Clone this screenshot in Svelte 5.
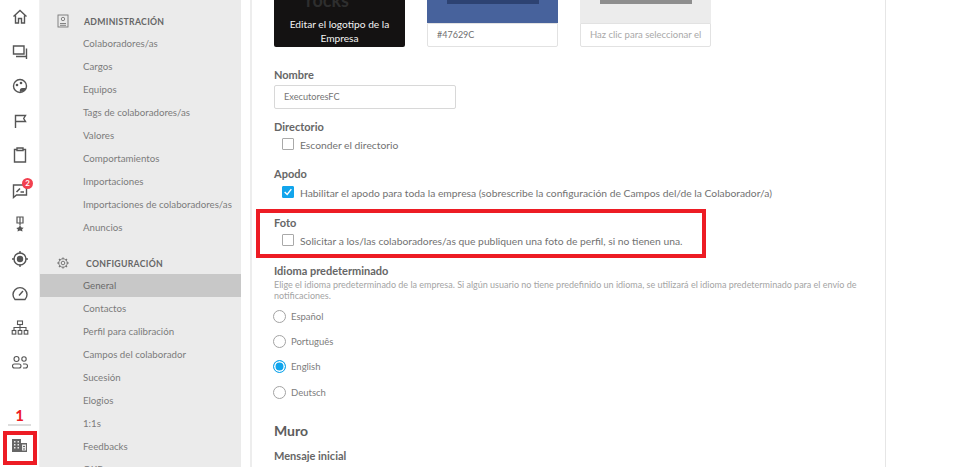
<script>
	const railTop = ['home', 'chat', 'palette', 'flag', 'clip', 'review', 'medal', 'target', 'gauge', 'org', 'people'];
	const admin = [
		'Colaboradores/as',
		'Cargos',
		'Equipos',
		'Tags de colaboradores/as',
		'Valores',
		'Comportamientos',
		'Importaciones',
		'Importaciones de colaboradores/as',
		'Anuncios'
	];
	const config = [
		'General',
		'Contactos',
		'Perfil para calibración',
		'Campos del colaborador',
		'Sucesión',
		'Elogios',
		'1:1s',
		'Feedbacks',
		'OKRs'
	];
	const langs = ['Español', 'Português', 'English', 'Deutsch'];
</script>

<div class="page">
	<nav class="rail">
		{#each railTop as icon}
			<div class="rail-item">
				<svg width="18" height="18" viewBox="0 0 18 18" fill="none" stroke="#555" stroke-width="1.400">
					{#if icon === 'home'}
						<path d="M2.500 8.500L9 2.500l6.500 6M4.500 7.500v7.500h3v-4.500h3V15h3V7.500" />
					{:else if icon === 'chat'}
						<path d="M2.500 3h10.500v8H2.500zM5 13.500h10.500V5.500M15.500 13.500V16" />
					{:else if icon === 'palette'}
						<circle cx="9" cy="9" r="6.500" />
						<circle cx="6" cy="8" r="1.300" fill="#555" stroke="none" />
						<circle cx="10" cy="6" r="1.300" fill="#555" stroke="none" />
						<path d="M9 15c-.8-2 .2-4 2.500-4H15l-1.500 3z" fill="#555" stroke="none" />
					{:else if icon === 'flag'}
						<path d="M4.500 16V3.500h10l-1.800 3 1.800 3H4.500" />
					{:else if icon === 'clip'}
						<path d="M6 3.500H3.500v12.500h11V3.500H12M6 2h6v2.500H6z" />
					{:else if icon === 'review'}
						<path d="M2.500 4h13v10H5.500l-3 2.500z" />
						<path d="M5.500 11l3.500-3.500M9.500 11H13" stroke-width="1.600" />
					{:else if icon === 'medal'}
						<path d="M6 2h6v6H6zM9 2v8.500" stroke-width="1.200" />
						<path d="M9 10.500l1.500 2 2.200.3-1.600 1.500.4 2.200L9 15.600l-2.500 1 .4-2.200-1.600-1.500 2.200-.3z" fill="#555" stroke="none" />
					{:else if icon === 'target'}
						<circle cx="9" cy="9" r="6" />
						<circle cx="9" cy="9" r="3.200" fill="#555" stroke="none" />
						<path d="M9 1v2.500M9 14.500V17M1 9h2.500M14.500 9H17" />
					{:else if icon === 'gauge'}
						<path d="M4 15.500a7 7 0 1 1 10 0z" />
						<path d="M8 11.500l4-4.500" />
					{:else if icon === 'org'}
						<g stroke-width="1.100">
							<rect x="6.500" y="2" width="5" height="3.500" />
							<path d="M9 5.500V9M3 11.500V8.500h12v3M9 9v2.500" />
							<rect x="1.200" y="11.500" width="3.600" height="3.600" />
							<rect x="7.200" y="11.500" width="3.600" height="3.600" />
							<rect x="13.200" y="11.500" width="3.600" height="3.600" />
						</g>
					{:else}
						<g stroke-width="1.100">
							<circle cx="5.500" cy="6" r="2.500" />
							<circle cx="13" cy="6" r="2.200" />
							<rect x="1.500" y="11" width="8.500" height="4" rx="2" />
							<path d="M12 11h2.500a2 2 0 0 1 0 4H12" />
						</g>
					{/if}
				</svg>
				{#if icon === 'review'}<span class="badge">2</span>{/if}
			</div>
		{/each}
		<div class="rail-end">
			<span class="step">1</span>
			<span class="rail-line"></span>
			<div class="company">
				<svg width="15" height="13" viewBox="0 0 15 13" fill="#666" stroke="none">
					<path d="M0 0h9v13H0zM9 4h6v9H9z" />
					<path d="M2 2h1.500v1.500H2zM5.500 2H7v1.500H5.500zM2 5h1.500v1.500H2zM5.500 5H7v1.500H5.500zM2 8h1.500v1.500H2zM5.500 8H7v1.500H5.500zM10 5.500h4v6h-4z" fill="#e8e8e8" />
					<path d="M11 7h2v1h-2zM11 9.500h2v1h-2z" />
				</svg>
			</div>
		</div>
	</nav>

	<aside class="side">
		<section class="group">
			<header class="group-head">
				<svg width="12" height="14" viewBox="0 0 12 14" fill="none" stroke="#777" stroke-width="0.900">
					<rect x="1" y="1" width="10" height="12" />
					<circle cx="6" cy="5" r="1.700" />
					<path d="M3 9.500h6M3 11.300h6" />
				</svg>
				<span>ADMINISTRACIÓN</span>
			</header>
			{#each admin as item}
				<div class="link">{item}</div>
			{/each}
		</section>
		<section class="group">
			<header class="group-head config">
				<svg width="12" height="12" viewBox="0 0 12 12" fill="none" stroke="#777" stroke-width="1">
					<circle cx="6" cy="6" r="1.800" />
					<circle cx="6" cy="6" r="4.200" />
					<path d="M6 .4v1.600M6 10v1.600M.4 6H2M10 6h1.600M2 2l1.200 1.200M8.800 8.800L10 10M10 2L8.800 3.200M3.200 8.800L2 10" stroke-width="1.300" />
				</svg>
				<span>CONFIGURACIÓN</span>
			</header>
			{#each config as item, i}
				<div class="link" class:active={i === 0}>{item}</div>
			{/each}
		</section>
	</aside>

	<main class="main">
		<div class="brand">
			<div class="tile logo">
				<span class="logo-word">rocks</span>
				<span class="logo-text">Editar el logotipo de la Empresa</span>
			</div>
			<div class="swatch">
				<div class="swatch-color blue"><span class="swatch-bar navy"></span></div>
				<div class="swatch-input">#47629C</div>
			</div>
			<div class="swatch">
				<div class="swatch-color grey"><span class="swatch-bar mid"></span></div>
				<div class="swatch-input hint">Haz clic para seleccionar el</div>
			</div>
		</div>

		<div class="label name-label">Nombre</div>
		<div class="text-input">ExecutoresFC</div>

		<div class="label dir-label">Directorio</div>
		<div class="check">
			<span class="box"></span>
			<span>Esconder el directorio</span>
		</div>

		<div class="label apodo-label">Apodo</div>
		<div class="check low">
			<span class="box checked">
				<svg width="12" height="12" viewBox="0 0 12 12" fill="none" stroke="#fff" stroke-width="1.700"><path d="M2 6l3 3 5-6.500" /></svg>
			</span>
			<span>Habilitar el apodo para toda la empresa (sobrescribe la configuración de Campos del/de la Colaborador/a)</span>
		</div>

		<div class="foto">
			<div class="label">Foto</div>
			<div class="check">
				<span class="box"></span>
				<span>Solicitar a los/las colaboradores/as que publiquen una foto de perfil, si no tienen una.</span>
			</div>
			<span class="highlight"></span>
		</div>

		<div class="label lang-label">Idioma predeterminado</div>
		<p class="help">Elige el idioma predeterminado de la empresa. Si algún usuario no tiene predefinido un idioma, se utilizará el idioma predeterminado para el envío de notificaciones.</p>
		<div class="radios">
			{#each langs as lang}
				<div class="radio-row">
					<span class="radio" class:on={lang === 'English'}></span>
					<span>{lang}</span>
				</div>
			{/each}
		</div>

		<h2>Muro</h2>
		<div class="label">Mensaje inicial</div>
	</main>
	<span class="company-box"></span>
</div>

<style>
	:global(body) {
		margin: 0;
		background: #fff;
	}
	.page {
		position: relative;
		display: flex;
		width: 955px;
		height: 467px;
		overflow: hidden;
		font-family: Lato, 'Noto Sans', sans-serif;
		color: #6f6f6f;
	}
	.rail {
		flex: 0 0 40px;
		display: flex;
		flex-direction: column;
		align-items: center;
		box-sizing: border-box;
		border-right: 1px solid #f0f0f0;
	}
	.rail-item {
		position: relative;
		flex: 0 0 34.5px;
		display: flex;
		align-items: center;
		justify-content: center;
		width: 100%;
	}
	.badge {
		position: absolute;
		top: 5px;
		left: 22px;
		width: 11px;
		height: 11px;
		border-radius: 50%;
		background: #f2404f;
		color: #fff;
		font-size: 8px;
		font-weight: 700;
		line-height: 11px;
		text-align: center;
	}
	.rail-end {
		margin-top: auto;
		display: flex;
		flex-direction: column;
		align-items: center;
	}
	.step {
		color: #ed1c24;
		font-size: 15px;
		font-weight: 700;
		line-height: 18px;
	}
	.rail-line {
		width: 23px;
		height: 2px;
		background: #ddd;
	}
	.company {
		height: 39px;
		display: flex;
		align-items: center;
		padding-bottom: 2px;
	}
	.company-box {
		position: absolute;
		left: 3px;
		top: 431px;
		width: 34px;
		height: 34px;
		box-sizing: border-box;
		border: 4px solid #ed1c24;
	}
	.side {
		flex: 0 0 201px;
		background: #ebebeb;
		padding-top: 10px;
		box-sizing: border-box;
	}
	.group + .group {
		margin-top: 13px;
	}
	.group-head {
		display: flex;
		align-items: center;
		height: 22px;
		padding-left: 17px;
		font-size: 8.700px;
		font-weight: 700;
		color: #666;
	}
	.group-head span {
		margin-left: 15px;
		letter-spacing: 0.300px;
	}
	.group-head.config span {
		margin-left: 17px;
	}
	.link {
		height: 23px;
		line-height: 23px;
		padding-left: 43px;
		font-size: 9.700px;
		color: #7b7b7b;
		white-space: nowrap;
	}
	.link.active {
		background: #c8c8c8;
		color: #6a6a6a;
	}
	.main {
		flex: 0 0 636px;
		margin-left: 9px;
		padding-left: 22px;
		box-sizing: border-box;
		border-left: 2px solid #ededed;
		border-right: 1px solid #e6e6e6;
		height: 467px;
		font-size: 10px;
	}
	.brand {
		display: flex;
		gap: 22px;
		height: 47px;
	}
	.tile {
		position: relative;
		width: 131px;
		background: #141212;
		color: #fff;
		border-radius: 0 0 2px 2px;
		overflow: hidden;
		text-align: center;
	}
	.logo-word {
		position: absolute;
		top: -11px;
		left: 32px;
		font-size: 18px;
		font-weight: 700;
		color: #2e2e2e;
	}
	.logo-text {
		position: absolute;
		left: 8px;
		right: 8px;
		bottom: 2px;
		font-size: 10.200px;
		line-height: 13.500px;
		color: #f2f2f2;
	}
	.swatch {
		width: 131px;
		display: flex;
		flex-direction: column;
	}
	.swatch-color {
		height: 23px;
		display: flex;
		justify-content: center;
		align-items: flex-start;
	}
	.blue {
		background: #47629c;
	}
	.grey {
		background: #ececec;
	}
	.swatch-bar {
		width: 92px;
		height: 4px;
	}
	.navy {
		background: #2d4272;
	}
	.mid {
		background: #8e8e8e;
	}
	.swatch-input {
		height: 24px;
		line-height: 22px;
		box-sizing: border-box;
		border: 1px solid #e2e2e2;
		border-radius: 0 0 2px 2px;
		padding-left: 9px;
		font-size: 9px;
		color: #6f6f6f;
		white-space: nowrap;
		overflow: hidden;
	}
	.swatch-input.hint {
		font-size: 9.500px;
		color: #a8a8a8;
	}
	.label {
		font-size: 11px;
		font-weight: 700;
		color: #666;
		line-height: 14px;
	}
	.name-label {
		margin-top: 21px;
	}
	.text-input {
		width: 182px;
		height: 24px;
		line-height: 22px;
		box-sizing: border-box;
		border: 1px solid #d8d8d8;
		border-radius: 2px;
		padding-left: 9px;
		margin-top: 3px;
		font-size: 9.200px;
		color: #757575;
	}
	.dir-label {
		margin-top: 11px;
	}
	.apodo-label {
		margin-top: 12px;
	}
	.check {
		display: flex;
		align-items: center;
		gap: 6px;
		padding-left: 8px;
		margin-top: 1px;
		height: 20px;
		font-size: 10.300px;
		color: #727272;
		white-space: nowrap;
	}
	.check.low {
		margin-top: 2px;
	}
	.box {
		width: 10px;
		height: 10px;
		flex: none;
		border: 1px solid #a9a9a9;
		border-radius: 1px;
		display: flex;
		align-items: center;
		justify-content: center;
		margin-top: -3px;
	}
	.box.checked {
		background: #12a5ec;
		border-color: #12a5ec;
	}
	.foto {
		position: relative;
		margin-top: 13px;
	}
	.highlight {
		position: absolute;
		left: -18px;
		top: -7px;
		width: 450px;
		height: 49px;
		box-sizing: border-box;
		border: 4px solid #ed1c24;
	}
	.lang-label {
		margin-top: 13px;
	}
	.help {
		margin: 1px 0 0;
		width: 590px;
		font-size: 9px;
		line-height: 11px;
		color: #a4a4a4;
	}
	.radios {
		margin-top: 1px;
		padding-top: 2px;
	}
	.radio-row {
		display: flex;
		align-items: center;
		gap: 5px;
		height: 25.200px;
		margin-left: -1px;
		font-size: 9.500px;
		color: #7d7d7d;
	}
	.radio {
		width: 11px;
		height: 11px;
		border: 1.500px solid #a3a3a3;
		border-radius: 50%;
		flex: none;
		background: #fff;
	}
	.radio.on {
		border-color: #12a5ec;
		background: #12a5ec;
		box-shadow: inset 0 0 0 1.500px #fff;
	}
	h2 {
		margin: 16px 0 9px;
		font-size: 14px;
		line-height: 19px;
		font-weight: 700;
		color: #5d5d5d;
	}
</style>
